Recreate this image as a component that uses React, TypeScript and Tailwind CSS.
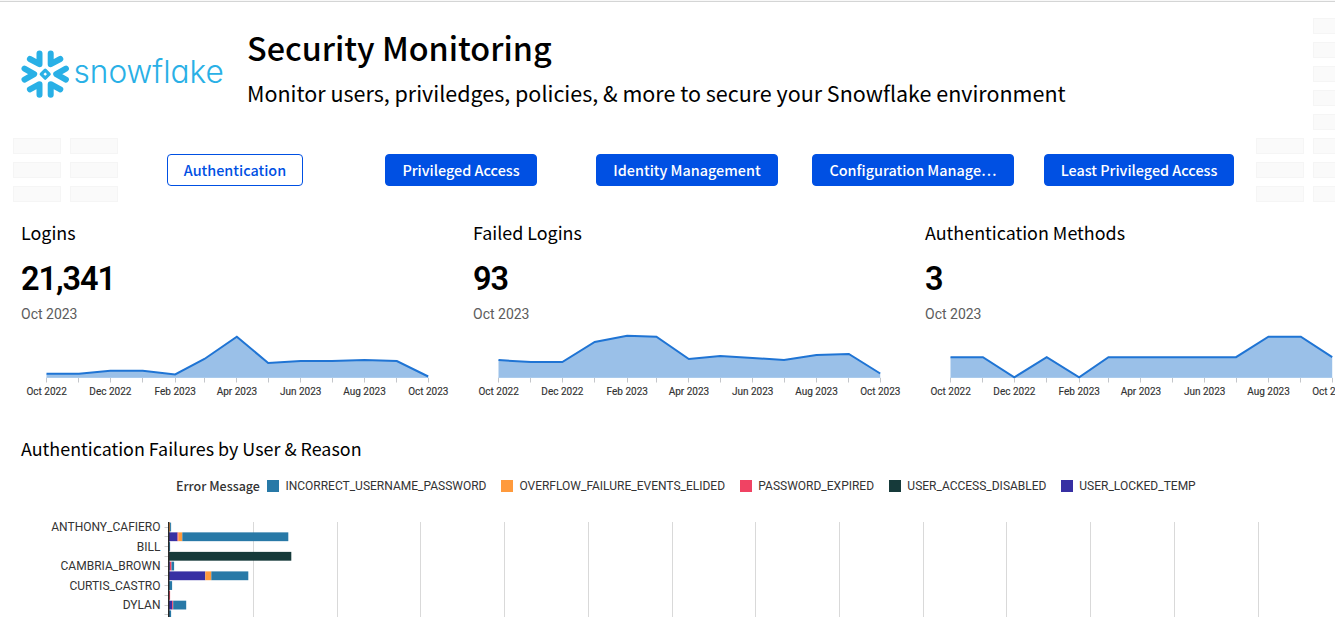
const DAYS = [0, 31, 61, 92, 123, 151, 182, 212, 243, 273, 304, 335, 365];
const AXIS_LABELS = ["Oct 2022", "Dec 2022", "Feb 2023", "Apr 2023", "Jun 2023", "Aug 2023", "Oct 2023"];

interface Metric {
  title: string;
  value: string;
  heights: number[];
}

const METRICS: Metric[] = [
  { title: "Logins", value: "21,341", heights: [4, 4, 7, 7, 3.3, 18.7, 41, 14.7, 16.7, 16.7, 17.6, 16.6, 1.2] },
  { title: "Failed Logins", value: "93", heights: [17.6, 15.7, 15.7, 35.7, 42, 41, 18.7, 21.6, 19.7, 17.7, 22.7, 23.7, 4.2] },
  { title: "Authentication Methods", value: "3", heights: [20.5, 20.5, 0.4, 20.5, 0.4, 20.5, 20.5, 20.5, 20.5, 20.5, 41, 41, 20.5] },
];

const TABS = [
  { label: "Authentication", box: "ml-[49px] w-[136px]", active: true },
  { label: "Privileged Access", box: "ml-[82px] w-[152px]", active: false },
  { label: "Identity Management", box: "ml-[59px] w-[182px]", active: false },
  { label: "Configuration Manage…", box: "ml-[34px] w-[202px]", active: false },
  { label: "Least Privileged Access", box: "ml-[30px] w-[190px]", active: false },
];

const BLUE = "#2879a7";
const ORANGE = "#ff9a3c";
const RED = "#f04363";
const DARK = "#163a3a";
const PURPLE = "#3730a3";

const LEGEND = [
  { label: "INCORRECT_USERNAME_PASSWORD", swatch: "bg-[#2879a7]", width: "w-[215.6px]" },
  { label: "OVERFLOW_FAILURE_EVENTS_ELIDED", swatch: "bg-[#ff9a3c]", width: "w-[220.6px]" },
  { label: "PASSWORD_EXPIRED", swatch: "bg-[#f04363]", width: "w-[130.6px]" },
  { label: "USER_ACCESS_DISABLED", swatch: "bg-[#163a3a]", width: "w-[153.6px]" },
  { label: "USER_LOCKED_TEMP", swatch: "bg-[#3730a3]", width: "w-[134px]" },
];

const BARS: { name?: string; parts: [string, number][] }[] = [
  { name: "ANTHONY_CAFIERO", parts: [[ORANGE, 1], [BLUE, 1]] },
  { parts: [[PURPLE, 8.4], [RED, 0.9], [ORANGE, 3.9], [BLUE, 106]] },
  { name: "BILL", parts: [[BLUE, 1]] },
  { parts: [[DARK, 122.2]] },
  { name: "CAMBRIA_BROWN", parts: [[PURPLE, 0.8], [RED, 1.6], [BLUE, 2.6]] },
  { parts: [[PURPLE, 36.2], [ORANGE, 6], [BLUE, 37]] },
  { name: "CURTIS_CASTRO", parts: [[BLUE, 3]] },
  { parts: [[RED, 1]] },
  { name: "DYLAN", parts: [[PURPLE, 3.1], [RED, 1], [BLUE, 13]] },
  { parts: [[BLUE, 2]] },
];

function Tile() {
  return <div className="h-4 w-12 shrink-0 border border-[#f5f5f5] bg-[#fafafa]" />;
}

function TileColumn({ count }: { count: number }) {
  return (
    <div className="flex flex-col gap-2">
      {Array.from({ length: count }, (_, i) => (
        <Tile key={i} />
      ))}
    </div>
  );
}

function Logo() {
  return (
    <div className="flex h-12 w-[227px] items-center">
      <svg width="48" height="48" viewBox="0 0 48 48" fill="none" stroke="#29b0e6" strokeWidth="6" strokeLinecap="round" strokeLinejoin="round">
        <path d="M18.5 3.6V14.2L8.9 9" />
        <path d="M29.7 3.6V14.2L39.3 9" />
        <path d="M18.5 44.8V34.2L8.9 39.4" />
        <path d="M29.7 44.8V34.2L39.3 39.4" />
        <path d="M3.5 18.6L13.2 24.1L3.5 29.6" />
        <path d="M44.9 18.6L35.2 24.1L44.9 29.6" />
        <path d="M24.2 20.2L28.2 24.2L24.2 28.2L20.2 24.2Z" strokeWidth="3.2" />
      </svg>
      <span className="relative -top-[2px] ml-[5px] text-[31.6px] leading-[48px] font-light text-[#29b0e6] font-['Inter',sans-serif] [font-feature-settings:'cv11']">
        snowflake
      </span>
    </div>
  );
}

function Sparkline({ heights }: { heights: number[] }) {
  const base = 44.7;
  const points = heights.map((h, i) => [29.5 + DAYS[i] * 1.0458, base - h]);
  const line = points.map(([x, y]) => `${x},${y}`).join(" ");
  const lastX = points[points.length - 1][0];
  return (
    <svg className="-ml-1 block overflow-visible" width="440" height="70" viewBox="0 0 440 70">
      <polygon points={`29.5,${base} ${line} ${lastX},${base}`} fill="#9ac0e8" />
      <rect x="29.5" y="44" width={lastX - 29.5} height="1" fill="#a9caec" />
      <polyline points={line} fill="none" stroke="#1f74d4" strokeWidth="2" />
      {points.map(([x], i) => (
        <rect key={i} x={Math.round(x - 0.5)} y="45" width="1" height="4.5" fill="#c4c6ca" />
      ))}
      {AXIS_LABELS.map((label, i) => (
        <text key={label} x={points[i * 2][0] + 0.1} y="62" textAnchor="middle" fontSize="10" fill="#333333" stroke="#333333" strokeWidth="0.15">
          {label}
        </text>
      ))}
    </svg>
  );
}

function MetricCard({ metric }: { metric: Metric }) {
  return (
    <section className="w-[452px] shrink-0">
      <h2 className="text-[17.9px] leading-6 text-black font-['Noto_Sans_CJK_SC',sans-serif]">{metric.title}</h2>
      <div className="mt-[15px] text-[32.5px] leading-[40px] font-semibold tracking-[-1.1px] text-black">{metric.value}</div>
      <div className="mt-[5px] text-[14px] leading-5 text-[#5c5c5c]">Oct 2023</div>
      <div className="mt-[9px]">
        <Sparkline heights={metric.heights} />
      </div>
    </section>
  );
}

function FailureChart() {
  return (
    <svg className="block overflow-visible" width="1314" height="95" viewBox="21 522 1314 95">
      {Array.from({ length: 13 }, (_, i) => (
        <rect key={i} x={Math.round(252.9 + i * 83.73)} y="522" width="1" height="95" fill="#d9d9d9" />
      ))}
      {BARS.map((bar, row) => {
        const mid = 527 + row * 9.76;
        let x = 169.1;
        return (
          <g key={row}>
            <rect x="164.5" y={Math.round(mid - 0.5)} width="4" height="1" fill="#d0d0d0" />
            {bar.parts.map(([color, width], i) => {
              const start = x;
              x += width;
              return <rect key={i} x={start} y={mid - 4.4} width={width} height="8.8" fill={color} />;
            })}
            {bar.name && (
              <text x="160.5" y={mid + 4} textAnchor="end" fontSize="12" fill="#333333">
                {bar.name}
              </text>
            )}
          </g>
        );
      })}
      <rect x="168.1" y="522" width="1.3" height="95" fill="#111111" />
    </svg>
  );
}

export default function App() {
  return (
    <main className="h-[617px] w-full overflow-hidden bg-white font-['Roboto',sans-serif]">
      <div className="h-[2px] border-b border-[#d4d5d5] bg-[#f8f8f8]" />
      <div className="flex h-[209px] justify-between">
        <div className="flex flex-col">
          <header className="flex h-[136px] pt-[22px] pl-[20.5px]">
            <div className="pt-[26px]">
              <Logo />
            </div>
            <div className="-ml-[0.5px] font-['Noto_Sans_CJK_SC',sans-serif] text-black">
              <h1 className="text-[32.35px] leading-[46px] font-medium whitespace-nowrap">Security Monitoring</h1>
              <p className="mt-[6px] text-[21.49px] leading-[34px] whitespace-nowrap">
                Monitor users, priviledges, policies, &amp; more to secure your Snowflake environment
              </p>
            </div>
          </header>
          <div className="flex pl-[13px]">
            <div className="flex gap-[9px]">
              <TileColumn count={3} />
              <TileColumn count={3} />
            </div>
            <nav className="flex pt-4">
              {TABS.map((tab) => (
                <button
                  key={tab.label}
                  className={`${tab.box} h-8 shrink-0 rounded-[4px] border border-[#0050e3] text-center text-[14.4px] leading-[30px] font-medium whitespace-nowrap font-['Noto_Sans_CJK_SC',sans-serif] ${tab.active ? "bg-white text-[#0050e3]" : "bg-[#0050e3] text-white"}`}
                >
                  {tab.label}
                </button>
              ))}
            </nav>
          </div>
        </div>
        <div className="flex w-[79px] shrink-0 gap-[9px] overflow-hidden pt-4">
          <div className="pt-[120px]">
            <TileColumn count={3} />
          </div>
          <TileColumn count={8} />
        </div>
      </div>
      <div className="flex pt-[9px] pl-[21px]">
        {METRICS.map((metric) => (
          <MetricCard key={metric.title} metric={metric} />
        ))}
      </div>
      <section className="mt-[33px] pl-[21px]">
        <h2 className="text-[17.9px] leading-6 text-black font-['Noto_Sans_CJK_SC',sans-serif]">
          Authentication Failures by User &amp; Reason
        </h2>
        <div className="mt-[18px] flex h-4 items-center pl-[155px] text-[12px] leading-4 whitespace-nowrap text-[#333333]">
          <span className="w-[91px] text-[12.5px] font-medium font-['Noto_Sans_CJK_SC',sans-serif]">Error Message</span>
          {LEGEND.map((item) => (
            <div key={item.label} className="flex items-center">
              <span className={`mr-[6.4px] size-3 ${item.swatch}`} />
              <span className={item.width}>{item.label}</span>
            </div>
          ))}
        </div>
        <div className="mt-[28px]">
          <FailureChart />
        </div>
      </section>
    </main>
  );
}
